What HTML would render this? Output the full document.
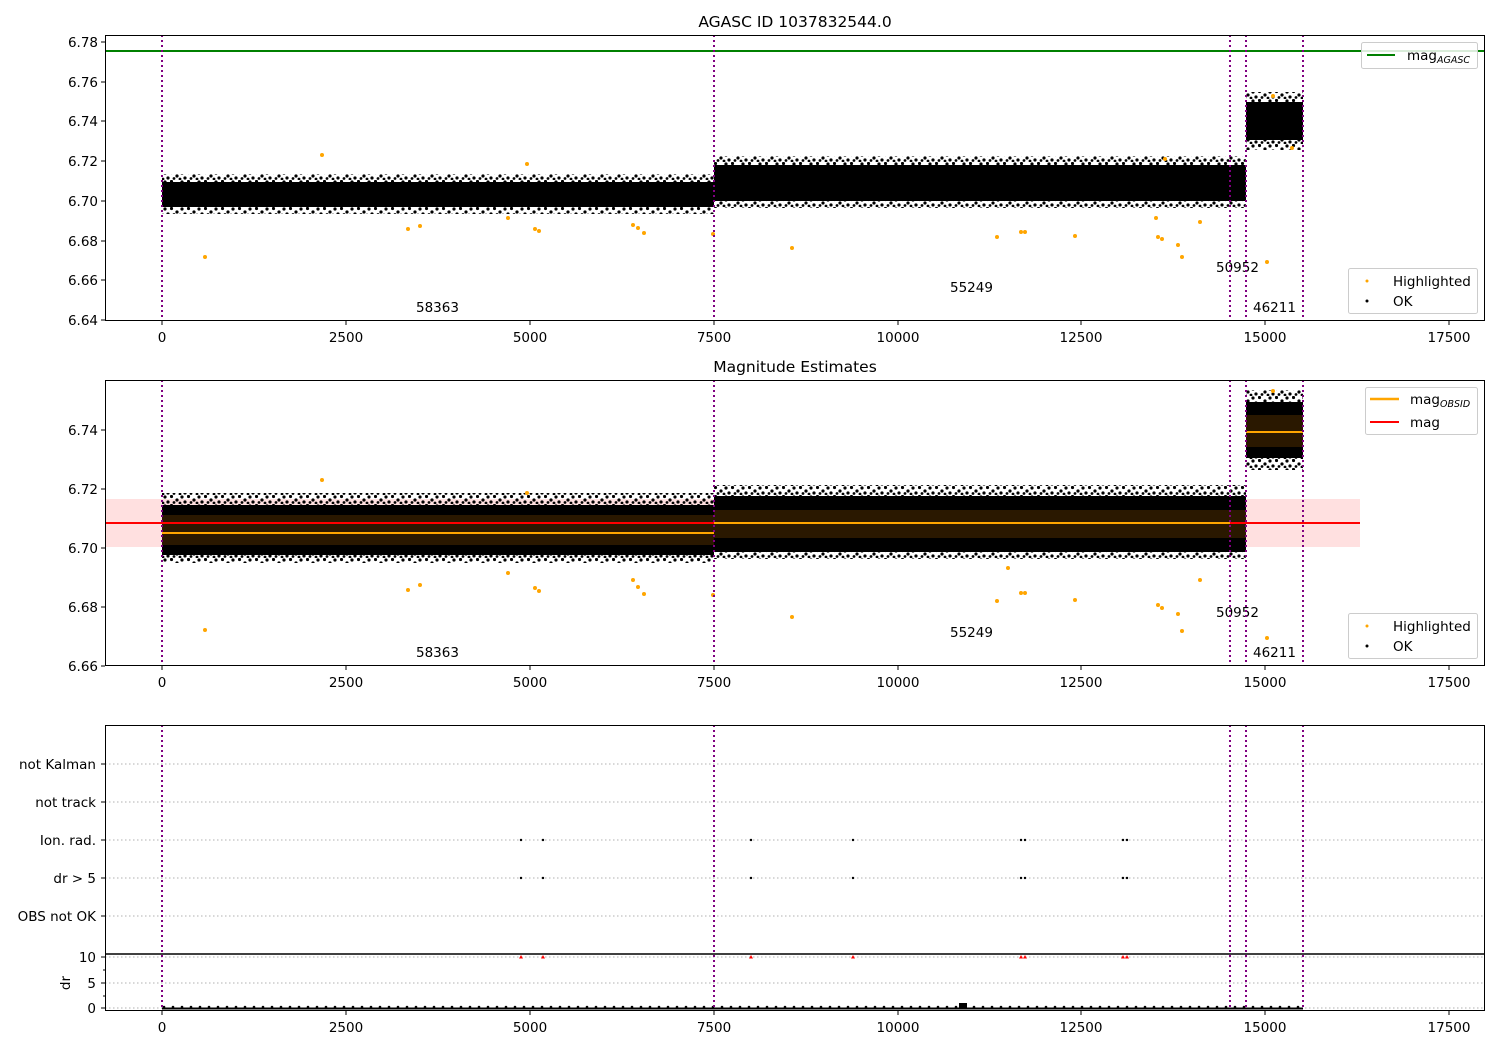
<!DOCTYPE html>
<html><head><meta charset="utf-8"><style>
html,body{margin:0;padding:0;background:#fff;}
svg{display:block;font-family:"DejaVu Sans","Liberation Sans",sans-serif;}
</style></head><body>
<svg width="1500" height="1050" viewBox="0 0 1500 1050" xmlns="http://www.w3.org/2000/svg">
<defs>
<pattern id="fr" width="17" height="9" patternUnits="userSpaceOnUse"><circle cx="1.5" cy="1.5" r="1.6" fill="#000"/><circle cx="7" cy="5" r="1.6" fill="#000"/><circle cx="12" cy="2" r="1.6" fill="#000"/><circle cx="15" cy="7" r="1.6" fill="#000"/><circle cx="4" cy="7.5" r="1.4" fill="#000"/><circle cx="10" cy="8" r="1.4" fill="#000"/></pattern>
<pattern id="fr2" width="9" height="5" patternUnits="userSpaceOnUse"><circle cx="2" cy="2" r="1.3" fill="#000"/></pattern>
</defs>
<rect width="1500" height="1050" fill="#fff"/>

<!-- ============ AXIS 1 ============ -->
<text x="795" y="27" font-size="15.5" text-anchor="middle">AGASC ID 1037832544.0</text>
<line x1="105" y1="51" x2="1485" y2="51" stroke="#008000" stroke-width="2"/>
<rect x="162" y="174" width="552" height="40" fill="url(#fr)"/>
<rect x="162" y="182" width="552" height="25" fill="#000"/>
<rect x="714" y="156" width="532" height="52" fill="url(#fr)"/>
<rect x="714" y="165" width="532" height="36" fill="#000"/>
<rect x="1246" y="92" width="57" height="58" fill="url(#fr)"/>
<rect x="1246" y="102" width="57" height="38" fill="#000"/>
<g fill="#ffa500">
<circle cx="205" cy="257" r="2"/><circle cx="322" cy="155" r="2"/><circle cx="408" cy="229" r="2"/><circle cx="420" cy="226" r="2"/><circle cx="508" cy="218" r="2"/><circle cx="527" cy="164" r="2"/><circle cx="535" cy="229" r="2"/><circle cx="539" cy="231" r="2"/><circle cx="633" cy="225" r="2"/><circle cx="638" cy="228" r="2"/><circle cx="644" cy="233" r="2"/><circle cx="713" cy="234" r="2"/><circle cx="792" cy="248" r="2"/><circle cx="997" cy="237" r="2"/><circle cx="1158" cy="237" r="2"/><circle cx="1156" cy="218" r="2"/><circle cx="1162" cy="239" r="2"/><circle cx="1075" cy="236" r="2"/><circle cx="1267" cy="262" r="2"/><circle cx="1178" cy="245" r="2"/><circle cx="1182" cy="257" r="2"/><circle cx="1021" cy="232" r="2"/><circle cx="1025" cy="232" r="2"/><circle cx="1292" cy="148" r="2"/><circle cx="1273" cy="96" r="2"/><circle cx="1165" cy="159" r="2"/><circle cx="1200" cy="222" r="2"/>
</g>
<g font-size="13.5">
<text x="416" y="312">58363</text><text x="950" y="292">55249</text><text x="1216" y="272">50952</text><text x="1253" y="312">46211</text>
</g>
<g stroke="#800080" stroke-width="2" stroke-dasharray="2,3">
<line x1="162" y1="35" x2="162" y2="321"/><line x1="714" y1="35" x2="714" y2="321"/><line x1="1230" y1="35" x2="1230" y2="321"/><line x1="1246" y1="35" x2="1246" y2="321"/><line x1="1303" y1="35" x2="1303" y2="321"/>
</g>
<rect x="105.5" y="35.5" width="1379" height="285" fill="none" stroke="#000" stroke-width="1"/>
<g stroke="#000"><line x1="101" y1="42" x2="105" y2="42"/><line x1="101" y1="82" x2="105" y2="82"/><line x1="101" y1="121" x2="105" y2="121"/><line x1="101" y1="161" x2="105" y2="161"/><line x1="101" y1="201" x2="105" y2="201"/><line x1="101" y1="241" x2="105" y2="241"/><line x1="101" y1="280" x2="105" y2="280"/><line x1="101" y1="320" x2="105" y2="320"/></g>
<g font-size="13.5" text-anchor="end">
<text x="98" y="47">6.78</text><text x="98" y="87">6.76</text><text x="98" y="126">6.74</text><text x="98" y="166">6.72</text><text x="98" y="206">6.70</text><text x="98" y="246">6.68</text><text x="98" y="285">6.66</text><text x="98" y="325">6.64</text>
</g>
<g stroke="#000"><line x1="162" y1="321" x2="162" y2="325"/><line x1="346" y1="321" x2="346" y2="325"/><line x1="530" y1="321" x2="530" y2="325"/><line x1="714" y1="321" x2="714" y2="325"/><line x1="898" y1="321" x2="898" y2="325"/><line x1="1081" y1="321" x2="1081" y2="325"/><line x1="1265" y1="321" x2="1265" y2="325"/><line x1="1449" y1="321" x2="1449" y2="325"/></g>
<g font-size="13.5" text-anchor="middle">
<text x="162" y="342">0</text><text x="346" y="342">2500</text><text x="530" y="342">5000</text><text x="714" y="342">7500</text><text x="898" y="342">10000</text><text x="1081" y="342">12500</text><text x="1265" y="342">15000</text><text x="1449" y="342">17500</text>
</g>
<rect x="1361.5" y="42.5" width="116" height="26" rx="2" fill="#fff" fill-opacity="0.85" stroke="#ccc"/>
<line x1="1367" y1="55" x2="1395" y2="55" stroke="#008000" stroke-width="2"/>
<text x="1407" y="60" font-size="13.5">mag<tspan font-size="9.5" font-style="italic" dy="3">AGASC</tspan></text>
<rect x="1348.5" y="268.5" width="129" height="45" rx="2" fill="#fff" fill-opacity="0.85" stroke="#ccc"/>
<circle cx="1367" cy="281" r="1.5" fill="#ffa500"/><text x="1393" y="286" font-size="13.5">Highlighted</text>
<circle cx="1367" cy="301" r="1.5" fill="#000"/><text x="1393" y="306" font-size="13.5">OK</text>

<!-- ============ AXIS 2 ============ -->
<text x="795" y="372" font-size="15.5" text-anchor="middle">Magnitude Estimates</text>
<rect x="105" y="499" width="1255" height="48" fill="#ff0000" fill-opacity="0.12"/>
<rect x="162" y="493" width="552" height="70" fill="url(#fr)"/>
<rect x="162" y="505" width="552" height="50" fill="#000"/>
<rect x="162" y="515" width="552" height="30" fill="#2a1800"/>
<rect x="714" y="485" width="532" height="74" fill="url(#fr)"/>
<rect x="714" y="496" width="532" height="56" fill="#000"/>
<rect x="714" y="510" width="532" height="28" fill="#2a1800"/>
<rect x="1246" y="390" width="57" height="80" fill="url(#fr)"/>
<rect x="1246" y="402" width="57" height="56" fill="#000"/>
<rect x="1246" y="415" width="57" height="32" fill="#2a1800"/>
<line x1="105" y1="523" x2="1360" y2="523" stroke="#ff0000" stroke-width="2"/>
<line x1="162" y1="533" x2="714" y2="533" stroke="#ffa500" stroke-width="2"/>
<line x1="714" y1="523" x2="1230" y2="523" stroke="#ffa500" stroke-width="2"/>
<line x1="1246" y1="432" x2="1303" y2="432" stroke="#ffa500" stroke-width="2"/>
<g fill="#ffa500">
<circle cx="205" cy="630" r="2"/><circle cx="322" cy="480" r="2"/><circle cx="408" cy="590" r="2"/><circle cx="420" cy="585" r="2"/><circle cx="508" cy="573" r="2"/><circle cx="527" cy="493" r="2"/><circle cx="535" cy="588" r="2"/><circle cx="539" cy="591" r="2"/><circle cx="633" cy="580" r="2"/><circle cx="638" cy="587" r="2"/><circle cx="644" cy="594" r="2"/><circle cx="713" cy="595" r="2"/><circle cx="792" cy="617" r="2"/><circle cx="997" cy="601" r="2"/><circle cx="1158" cy="605" r="2"/><circle cx="1162" cy="608" r="2"/><circle cx="1075" cy="600" r="2"/><circle cx="1267" cy="638" r="2"/><circle cx="1178" cy="614" r="2"/><circle cx="1182" cy="631" r="2"/><circle cx="1021" cy="593" r="2"/><circle cx="1025" cy="593" r="2"/><circle cx="1273" cy="391" r="2"/><circle cx="1200" cy="580" r="2"/><circle cx="1008" cy="568" r="2"/>
</g>
<g font-size="13.5">
<text x="416" y="657">58363</text><text x="950" y="637">55249</text><text x="1216" y="617">50952</text><text x="1253" y="657">46211</text>
</g>
<g stroke="#800080" stroke-width="2" stroke-dasharray="2,3">
<line x1="162" y1="380" x2="162" y2="666"/><line x1="714" y1="380" x2="714" y2="666"/><line x1="1230" y1="380" x2="1230" y2="666"/><line x1="1246" y1="380" x2="1246" y2="666"/><line x1="1303" y1="380" x2="1303" y2="666"/>
</g>
<rect x="105.5" y="380.5" width="1379" height="285" fill="none" stroke="#000"/>
<g stroke="#000"><line x1="101" y1="430" x2="105" y2="430"/><line x1="101" y1="489" x2="105" y2="489"/><line x1="101" y1="548" x2="105" y2="548"/><line x1="101" y1="607" x2="105" y2="607"/><line x1="101" y1="666" x2="105" y2="666"/></g>
<g font-size="13.5" text-anchor="end">
<text x="98" y="435">6.74</text><text x="98" y="494">6.72</text><text x="98" y="553">6.70</text><text x="98" y="612">6.68</text><text x="98" y="671">6.66</text>
</g>
<g stroke="#000"><line x1="162" y1="666" x2="162" y2="670"/><line x1="346" y1="666" x2="346" y2="670"/><line x1="530" y1="666" x2="530" y2="670"/><line x1="714" y1="666" x2="714" y2="670"/><line x1="898" y1="666" x2="898" y2="670"/><line x1="1081" y1="666" x2="1081" y2="670"/><line x1="1265" y1="666" x2="1265" y2="670"/><line x1="1449" y1="666" x2="1449" y2="670"/></g>
<g font-size="13.5" text-anchor="middle">
<text x="162" y="687">0</text><text x="346" y="687">2500</text><text x="530" y="687">5000</text><text x="714" y="687">7500</text><text x="898" y="687">10000</text><text x="1081" y="687">12500</text><text x="1265" y="687">15000</text><text x="1449" y="687">17500</text>
</g>
<rect x="1365.5" y="387.5" width="112" height="47" rx="2" fill="#fff" fill-opacity="0.85" stroke="#ccc"/>
<line x1="1370" y1="399" x2="1399" y2="399" stroke="#ffa500" stroke-width="2.5"/>
<text x="1410" y="404" font-size="13.5">mag<tspan font-size="9.5" font-style="italic" dy="3">OBSID</tspan></text>
<line x1="1370" y1="422" x2="1399" y2="422" stroke="#ff0000" stroke-width="2"/>
<text x="1410" y="427" font-size="13.5">mag</text>
<rect x="1348.5" y="613.5" width="129" height="45" rx="2" fill="#fff" fill-opacity="0.85" stroke="#ccc"/>
<circle cx="1367" cy="626" r="1.5" fill="#ffa500"/><text x="1393" y="631" font-size="13.5">Highlighted</text>
<circle cx="1367" cy="646" r="1.5" fill="#000"/><text x="1393" y="651" font-size="13.5">OK</text>

<!-- ============ AXIS 3 ============ -->
<g stroke="#b0b0b0" stroke-dasharray="1.5,2.5">
<line x1="105" y1="764" x2="1485" y2="764"/><line x1="105" y1="802" x2="1485" y2="802"/><line x1="105" y1="840" x2="1485" y2="840"/><line x1="105" y1="878" x2="1485" y2="878"/><line x1="105" y1="916" x2="1485" y2="916"/>
<line x1="105" y1="957" x2="1485" y2="957"/><line x1="105" y1="983" x2="1485" y2="983"/><line x1="105" y1="1008" x2="1485" y2="1008"/>
</g>
<g fill="#000">
<circle cx="521" cy="840" r="1.2"/><circle cx="543" cy="840" r="1.2"/><circle cx="751" cy="840" r="1.2"/><circle cx="853" cy="840" r="1.2"/><circle cx="1021" cy="840" r="1.2"/><circle cx="1025" cy="840" r="1.2"/><circle cx="1123" cy="840" r="1.2"/><circle cx="1127" cy="840" r="1.2"/>
<circle cx="521" cy="878" r="1.2"/><circle cx="543" cy="878" r="1.2"/><circle cx="751" cy="878" r="1.2"/><circle cx="853" cy="878" r="1.2"/><circle cx="1021" cy="878" r="1.2"/><circle cx="1025" cy="878" r="1.2"/><circle cx="1123" cy="878" r="1.2"/><circle cx="1127" cy="878" r="1.2"/>
</g>
<g fill="#ff0000">
<path d="M521 955l2 3.5h-4z"/><path d="M543 955l2 3.5h-4z"/><path d="M751 955l2 3.5h-4z"/><path d="M853 955l2 3.5h-4z"/><path d="M1021 955l2 3.5h-4z"/><path d="M1025 955l2 3.5h-4z"/><path d="M1123 955l2 3.5h-4z"/><path d="M1127 955l2 3.5h-4z"/>
</g>
<rect x="162" y="1005" width="1141" height="6" fill="url(#fr2)"/>
<rect x="162" y="1007.5" width="1141" height="2" fill="#000"/>
<rect x="959" y="1003" width="8" height="5" fill="#000"/>
<g stroke="#800080" stroke-width="2" stroke-dasharray="2,3">
<line x1="162" y1="725" x2="162" y2="1011"/><line x1="714" y1="725" x2="714" y2="1011"/><line x1="1230" y1="725" x2="1230" y2="1011"/><line x1="1246" y1="725" x2="1246" y2="1011"/><line x1="1303" y1="725" x2="1303" y2="1011"/>
</g>
<rect x="105.5" y="725.5" width="1379" height="285" fill="none" stroke="#000"/>
<line x1="105" y1="954" x2="1485" y2="954" stroke="#000" stroke-width="1.5"/>
<g stroke="#000"><line x1="101" y1="764" x2="105" y2="764"/><line x1="101" y1="802" x2="105" y2="802"/><line x1="101" y1="840" x2="105" y2="840"/><line x1="101" y1="878" x2="105" y2="878"/><line x1="101" y1="916" x2="105" y2="916"/><line x1="101" y1="957" x2="105" y2="957"/><line x1="101" y1="983" x2="105" y2="983"/><line x1="101" y1="1008" x2="105" y2="1008"/><line x1="103" y1="970" x2="105" y2="970"/><line x1="103" y1="996" x2="105" y2="996"/></g>
<g font-size="13.5" text-anchor="end">
<text x="96" y="769">not Kalman</text><text x="96" y="807">not track</text><text x="96" y="845">Ion. rad.</text><text x="96" y="883">dr &gt; 5</text><text x="96" y="921">OBS not OK</text>
<text x="96" y="962">10</text><text x="96" y="988">5</text><text x="96" y="1013">0</text>
</g>
<text x="0" y="0" font-size="13.5" text-anchor="middle" transform="translate(70,983) rotate(-90)">dr</text>
<g stroke="#000"><line x1="162" y1="1011" x2="162" y2="1015"/><line x1="346" y1="1011" x2="346" y2="1015"/><line x1="530" y1="1011" x2="530" y2="1015"/><line x1="714" y1="1011" x2="714" y2="1015"/><line x1="898" y1="1011" x2="898" y2="1015"/><line x1="1081" y1="1011" x2="1081" y2="1015"/><line x1="1265" y1="1011" x2="1265" y2="1015"/><line x1="1449" y1="1011" x2="1449" y2="1015"/></g>
<g font-size="13.5" text-anchor="middle">
<text x="162" y="1032">0</text><text x="346" y="1032">2500</text><text x="530" y="1032">5000</text><text x="714" y="1032">7500</text><text x="898" y="1032">10000</text><text x="1081" y="1032">12500</text><text x="1265" y="1032">15000</text><text x="1449" y="1032">17500</text>
</g>
</svg>
</body></html>
